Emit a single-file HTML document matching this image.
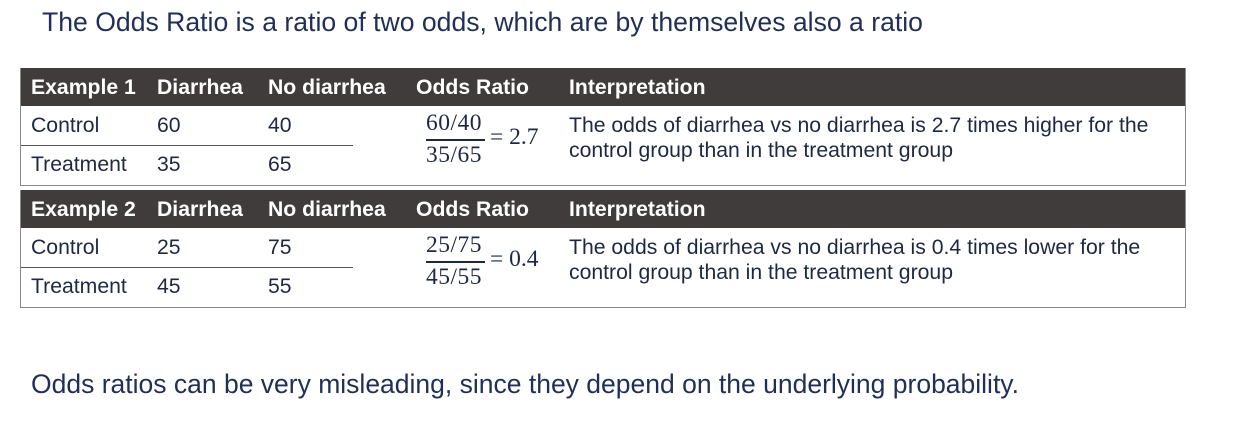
<!DOCTYPE html>
<html><head><style>
body{margin:0;width:1245px;height:433px;background:#fff;font-family:"Liberation Sans",sans-serif;color:#1b2847;position:relative;overflow:hidden}
.a{position:absolute;white-space:nowrap}
.title{left:42px;top:7px;font-size:26.6px;color:#1f2e5c}
.foot{left:31px;top:369px;font-size:26.5px;color:#1f2e5c}
.tbl{position:absolute;left:20px;width:1164px;border:1px solid #8a8a8a;border-top:none;background:#fff}
.hd{position:absolute;left:0;width:100%;height:38px;background:#403c3b;color:#fff;font-weight:bold;font-size:21.2px}
.hd span,.r span{position:absolute;top:8px;white-space:nowrap}
.r{position:absolute;left:0;width:100%;font-size:21.2px;height:39px}
.ln{position:absolute;left:0;width:332px;height:1px;background:#555}
.fr{position:absolute;font-family:"Liberation Serif",serif;font-size:23.5px;white-space:nowrap;width:150px;height:64px}
.fr .n{position:absolute;left:0;top:3px;letter-spacing:0.5px}
.fr .d{position:absolute;left:0;top:35px;letter-spacing:0.5px}
.fr .bar{position:absolute;left:0;top:32px;width:59px;height:1.5px;background:#1b2847}
.fr .e{position:absolute;left:64px;top:17px}
.it{position:absolute;left:548px;font-size:21.2px;line-height:25px;white-space:nowrap}
</style></head><body>
<div class="a title">The Odds Ratio is a ratio of two odds, which are by themselves also a ratio</div>

<div class="tbl" style="top:68px;height:117px">
 <div class="hd" style="top:0"><span style="left:10px">Example 1</span><span style="left:136px">Diarrhea</span><span style="left:247px">No diarrhea</span><span style="left:395px">Odds Ratio</span><span style="left:548px">Interpretation</span></div>
 <div class="r" style="top:38px"><span style="left:10px">Control</span><span style="left:136px">60</span><span style="left:247px">40</span></div>
 <div class="ln" style="top:77px"></div>
 <div class="r" style="top:77px"><span style="left:10px">Treatment</span><span style="left:136px">35</span><span style="left:247px">65</span></div>
 <div class="fr" style="left:405px;top:39px"><div class="n">60/40</div><div class="bar"></div><div class="d">35/65</div><div class="e">= 2.7</div></div>
 <div class="it" style="top:45px">The odds of diarrhea vs no diarrhea is 2.7 times higher for the<br>control group than in the treatment group</div>
</div>

<div class="tbl" style="top:190px;height:117px">
 <div class="hd" style="top:0"><span style="left:10px">Example 2</span><span style="left:136px">Diarrhea</span><span style="left:247px">No diarrhea</span><span style="left:395px">Odds Ratio</span><span style="left:548px">Interpretation</span></div>
 <div class="r" style="top:38px"><span style="left:10px">Control</span><span style="left:136px">25</span><span style="left:247px">75</span></div>
 <div class="ln" style="top:77px"></div>
 <div class="r" style="top:77px"><span style="left:10px">Treatment</span><span style="left:136px">45</span><span style="left:247px">55</span></div>
 <div class="fr" style="left:405px;top:39px"><div class="n">25/75</div><div class="bar"></div><div class="d">45/55</div><div class="e">= 0.4</div></div>
 <div class="it" style="top:45px">The odds of diarrhea vs no diarrhea is 0.4 times lower for the<br>control group than in the treatment group</div>
</div>

<div class="a foot">Odds ratios can be very misleading, since they depend on the underlying probability.</div>
</body></html>
